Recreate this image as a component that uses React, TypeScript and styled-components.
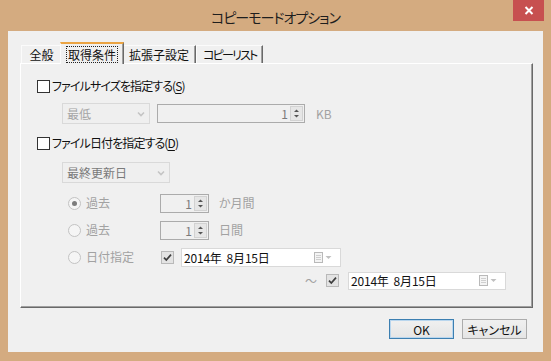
import React from 'react';
import styled, { createGlobalStyle } from 'styled-components';

const FONT = `"Noto Sans CJK JP", "Noto Sans", sans-serif`;

const Global = createGlobalStyle`
  html, body { margin: 0; padding: 0; }
  body {
    width: 551px; height: 361px; overflow: hidden;
    font-family: ${FONT};
    font-feature-settings: "palt";
  }
  * { box-sizing: border-box; }
`;

const Window = styled.div`
  width: 551px;
  height: 361px;
  background: #d4ab80;
  display: flex;
  flex-direction: column;
`;

const TitleBar = styled.div`
  height: 31px;
  display: grid;
  grid-template-columns: 1fr auto 1fr;
  align-items: center;
`;

const Title = styled.div`
  grid-column: 2;
  font-size: 14px;
  color: #1e1e1e;
  padding-top: 2px;
  letter-spacing: -1px;
`;

const CloseButton = styled.div`
  grid-column: 3;
  justify-self: end;
  align-self: start;
  width: 31px;
  height: 21px;
  margin-right: 7px;
  background: #c75050;
  display: flex;
  align-items: center;
  justify-content: center;
`;

const Client = styled.div`
  flex: 1;
  margin: 0 8px 9px;
  background: #f0f0f0;
  display: flex;
  flex-direction: column;
  padding: 12px 10px 0 12px;
`;

const TabStrip = styled.div`
  display: flex;
  align-items: flex-end;
  height: 21px;
  position: relative;
  z-index: 1;
  margin-bottom: -1px;
  padding-left: 1px;
`;

const Tab = styled.div<{ $active?: boolean; $tight?: boolean }>`
  height: ${(p) => (p.$active ? 22 : 18)}px;
  padding: 0 6px;
  margin: 0 ${(p) => (p.$active ? -2 : 0)}px ${(p) => (p.$active ? 0 : 1)}px;
  background: #f0f0f0;
  border-left: 1px solid #fbfbfb;
  border-top: ${(p) => (p.$active ? '2px solid #eba443' : '1px solid #fbfbfb')};
  border-right: 1px solid #696969;
  box-shadow: inset -1px 0 0 #a0a0a0;
  display: flex;
  align-items: center;
  justify-content: center;
  font-size: 12px;
  letter-spacing: ${(p) => (p.$tight ? '-1.8px' : '0')};
  color: #111;
  position: relative;
  z-index: ${(p) => (p.$active ? 2 : 1)};
`;

const FocusText = styled.span`
  outline: 1px dotted #222;
  outline-offset: 0px;
  padding: 0 1px;
  line-height: 15px;
`;

const Panel = styled.div`
  height: 245px;
  border-top: 1px solid #fff;
  border-left: 1px solid #fff;
  border-right: 1px solid #696969;
  border-bottom: 1px solid #696969;
  box-shadow: inset -1px -1px 0 #a0a0a0;
  padding: 12px 0 0 16px;
  display: flex;
  flex-direction: column;
`;

const Row = styled.div<{ $top?: number; $indent?: number; $h?: number }>`
  display: flex;
  align-items: center;
  height: ${(p) => p.$h ?? 20}px;
  margin-top: ${(p) => p.$top ?? 0}px;
  padding-left: ${(p) => p.$indent ?? 0}px;
`;

const Label = styled.span<{ $disabled?: boolean; $gap?: number; $tight?: boolean }>`
  font-size: 12px;
  color: ${(p) => (p.$disabled ? '#a2a2a2' : '#111')};
  margin-left: ${(p) => p.$gap ?? 0}px;
  letter-spacing: ${(p) => (p.$tight ? '-0.9px' : '0')};
  white-space: pre;
  line-height: 16px;
  u { text-decoration-thickness: 1px; text-underline-offset: 2px; }
`;

const CheckBoxBox = styled.span<{ $disabled?: boolean; $gap?: number }>`
  width: 13px;
  height: 13px;
  flex: none;
  margin-left: ${(p) => p.$gap ?? 0}px;
  border: 1px solid ${(p) => (p.$disabled ? '#b9b9b9' : '#333')};
  background: ${(p) => (p.$disabled ? '#e3e3e3' : '#fff')};
  display: flex;
  align-items: center;
  justify-content: center;
`;

const RadioItem = styled.div`
  width: 92px;
  display: flex;
  align-items: center;
  gap: 5px;
  flex: none;
`;

const RadioCircle = styled.span`
  width: 13px;
  height: 13px;
  border-radius: 50%;
  border: 1px solid #c3c3c3;
  background: #f5f5f5;
  display: flex;
  align-items: center;
  justify-content: center;
  flex: none;
`;

const RadioDot = styled.span`
  width: 5px;
  height: 5px;
  border-radius: 50%;
  background: #7c7c7c;
`;

const Combo = styled.div<{ $w: number; $dim?: boolean }>`
  width: ${(p) => p.$w}px;
  height: 21px;
  flex: none;
  border: 1px solid #d9d9d9;
  background: #efefef;
  display: flex;
  align-items: center;
  justify-content: space-between;
  padding: 0 4px 0 4px;
  font-size: 12px;
  color: ${(p) => (p.$dim ? '#a6a6a6' : '#7a7a7a')};
`;

const Spin = styled.div<{ $w: number; $gap?: number }>`
  width: ${(p) => p.$w}px;
  height: 19px;
  flex: none;
  margin-left: ${(p) => p.$gap ?? 0}px;
  border: 1px solid #ababab;
  background: #f0f0f0;
  display: flex;
  align-items: center;
  justify-content: flex-end;
  font-size: 12px;
  color: #7a7a7a;
`;

const SpinValue = styled.span`
  margin-right: 2px;
  line-height: 15px;
`;

const SpinButtons = styled.span`
  width: 13px;
  height: 15px;
  margin-right: 1px;
  border: 1px solid #d2d2d2;
  background: #e6e6e6;
  display: flex;
  align-items: center;
  justify-content: center;
`;

const DateBox = styled.div<{ $w: number; $h: number; $gap?: number }>`
  width: ${(p) => p.$w}px;
  height: ${(p) => p.$h}px;
  flex: none;
  margin-left: ${(p) => p.$gap ?? 0}px;
  border: 1px solid #d9d9d9;
  background: #fff;
  display: flex;
  align-items: center;
  padding: 0 8px 0 2px;
  font-size: 12px;
  color: #111;
`;

const DateText = styled.span`
  flex: 1;
  white-space: pre;
  line-height: 15px;
  letter-spacing: -0.2px;
`;

const DateIcons = styled.span`
  display: flex;
  align-items: center;
`;

const Tilde = styled.span`
  font-size: 12px;
  color: #a2a2a2;
  width: 12px;
`;

const ButtonRow = styled.div`
  display: flex;
  justify-content: flex-end;
  gap: 8px;
  margin-top: 11px;
  padding-right: 6px;
`;

const Button = styled.div<{ $default?: boolean }>`
  width: 65px;
  height: 20px;
  border: 1px solid ${(p) => (p.$default ? '#3c7fb1' : '#acacac')};
  box-shadow: ${(p) => (p.$default ? 'inset 0 0 0 1px #b9d6ee' : 'none')};
  background: linear-gradient(#f0f0f0, #e5e5e5);
  display: flex;
  align-items: center;
  justify-content: center;
  font-size: 12px;
  color: #111;
`;

const CheckMark = () => (
  <svg width="11" height="11" viewBox="0 0 11 11">
    <path d="M2 5.6 L4.3 8 L9 2.6" fill="none" stroke="#3e3e3e" strokeWidth="1.7" />
  </svg>
);

const CheckBox: React.FC<{ checked?: boolean; disabled?: boolean; gap?: number }> = ({ checked, disabled, gap }) => (
  <CheckBoxBox $disabled={disabled} $gap={gap}>{checked && <CheckMark />}</CheckBoxBox>
);

const Chevron = () => (
  <svg width="8" height="6" viewBox="0 0 8 6">
    <path d="M1 1.5 L4 4.5 L7 1.5" fill="none" stroke="#c4c4c4" strokeWidth="1.6" />
  </svg>
);

const SpinArrows = () => (
  <svg width="11" height="13" viewBox="0 0 11 13">
    <path d="M3 5 L5.5 2.5 L8 5 Z" fill="#555" />
    <path d="M3 8 L5.5 10.5 L8 8 Z" fill="#555" />
  </svg>
);

const CalendarIcon = () => (
  <svg width="18" height="11" viewBox="0 0 18 11">
    <rect x="0.5" y="0.5" width="8" height="10" fill="#f4f4f4" stroke="#b9b9b9" />
    <path d="M2 3.5 H7 M2 5.5 H7 M2 7.5 H7" stroke="#cfcfcf" strokeWidth="1" />
    <path d="M11.5 4 L17.5 4 L14.5 7 Z" fill="#c0c0c0" />
  </svg>
);

const Radio: React.FC<{ checked?: boolean; label: string }> = ({ checked, label }) => (
  <RadioItem>
    <RadioCircle>{checked && <RadioDot />}</RadioCircle>
    <Label $disabled>{label}</Label>
  </RadioItem>
);

const SpinBox: React.FC<{ w: number; gap?: number }> = ({ w, gap }) => (
  <Spin $w={w} $gap={gap}>
    <SpinValue>1</SpinValue>
    <SpinButtons>
      <SpinArrows />
    </SpinButtons>
  </Spin>
);

export default function App() {
  return (
    <>
      <Global />
      <Window>
        <TitleBar>
          <Title>コピーモードオプション</Title>
          <CloseButton>
            <svg width="10" height="9" viewBox="0 0 10 9">
              <path d="M1.5 1 L8.5 8 M8.5 1 L1.5 8" stroke="#fff" strokeWidth="2" />
            </svg>
          </CloseButton>
        </TitleBar>
        <Client>
          <TabStrip>
            <Tab style={{ width: 41 }}>全般</Tab>
            <Tab $active>
              <FocusText>取得条件</FocusText>
            </Tab>
            <Tab>拡張子設定</Tab>
            <Tab $tight>コピーリスト</Tab>
          </TabStrip>
          <Panel>
            <Row>
              <CheckBox />
              <Label $gap={2} $tight>
                ファイルサイズを指定する(<u>S</u>)
              </Label>
            </Row>
            <Row $top={7} $h={21} $indent={25}>
              <Combo $w={88} $dim>
                <span>最低</span>
                <Chevron />
              </Combo>
              <SpinBox w={148} gap={7} />
              <Label $disabled $gap={11}>KB</Label>
            </Row>
            <Row $top={9}>
              <CheckBox />
              <Label $gap={2} $tight>
                ファイル日付を指定する(<u>D</u>)
              </Label>
            </Row>
            <Row $top={9} $h={21} $indent={25}>
              <Combo $w={108}>
                <span>最終更新日</span>
                <Chevron />
              </Combo>
            </Row>
            <Row $top={10} $indent={31}>
              <Radio checked label="過去" />
              <SpinBox w={49} />
              <Label $disabled $gap={10}>か月間</Label>
            </Row>
            <Row $top={7} $indent={31}>
              <Radio label="過去" />
              <SpinBox w={49} />
              <Label $disabled $gap={10}>日間</Label>
            </Row>
            <Row $top={7} $indent={31}>
              <Radio label="日付指定" />
              <CheckBox checked disabled gap={1} />
              <DateBox $w={160} $h={19} $gap={7}>
                <DateText>2014年  8月15日</DateText>
                <DateIcons>
                  <CalendarIcon />
                </DateIcons>
              </DateBox>
            </Row>
            <Row $top={4} $h={19} $indent={268}>
              <Tilde>～</Tilde>
              <CheckBox checked disabled gap={9} />
              <DateBox $w={158} $h={18} $gap={9}>
                <DateText>2014年  8月15日</DateText>
                <DateIcons>
                  <CalendarIcon />
                </DateIcons>
              </DateBox>
            </Row>
          </Panel>
          <ButtonRow>
            <Button $default>OK</Button>
            <Button>キャンセル</Button>
          </ButtonRow>
        </Client>
      </Window>
    </>
  );
}
